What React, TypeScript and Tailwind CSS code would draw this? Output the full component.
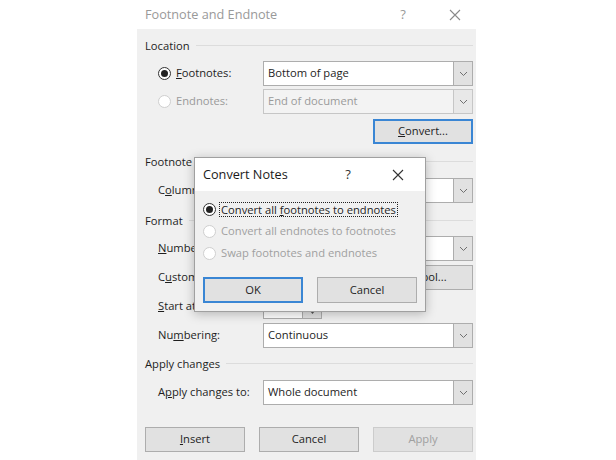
import React from 'react';

function Chevron() {
  return (
    <svg width="9" height="6" viewBox="0 0 9 6" fill="none">
      <path d="M1 1l3.5 3.5L8 1" stroke="#707070" strokeWidth="1" />
    </svg>
  );
}

function CloseIcon({ color }: { color: string }) {
  return (
    <svg width="12" height="12" viewBox="0 0 12 12" fill="none">
      <path d="M1 1l10 10M11 1L1 11" stroke={color} strokeWidth="1.1" />
    </svg>
  );
}

function Radio({ checked, disabled }: { checked?: boolean; disabled?: boolean }) {
  return (
    <span
      className={`flex h-[13px] w-[13px] shrink-0 items-center justify-center rounded-full border bg-white ${
        disabled ? 'border-[#cfcfcf]' : 'border-[#333]'
      }`}
    >
      {checked && <span className="h-[7px] w-[7px] rounded-full bg-[#222]" />}
    </span>
  );
}

function Select({ value = '', disabled }: { value?: string; disabled?: boolean }) {
  return (
    <div
      className={`flex h-[25px] flex-1 border ${
        disabled ? 'border-[#c6c6c6] bg-[#f3f3f3] text-[#9a9a9a]' : 'border-[#adadad] bg-white text-[#1e1e1e]'
      }`}
    >
      <span className="flex flex-1 items-center pl-[4px]">{value}</span>
      <span
        className={`flex w-[19px] items-center justify-center border-l ${
          disabled ? 'border-[#c6c6c6] bg-[#e8e8e8]' : 'border-[#adadad] bg-[#e1e1e1]'
        }`}
      >
        <Chevron />
      </span>
    </div>
  );
}

function Button({
  children,
  focused,
  disabled,
  className = '',
}: {
  children: React.ReactNode;
  focused?: boolean;
  disabled?: boolean;
  className?: string;
}) {
  return (
    <div
      className={`flex h-[25px] w-[100px] items-center justify-center bg-[#e1e1e1] ${
        focused ? 'border-2 border-[#3a86d4]' : disabled ? 'border border-[#cccccc] text-[#a0a0a0]' : 'border border-[#adadad]'
      } ${className}`}
    >
      {children}
    </div>
  );
}

function Header({ label, className = '' }: { label: string; className?: string }) {
  return (
    <div className={`flex h-[17px] items-center ${className}`}>
      <span>{label}</span>
      <div className="ml-[6px] mt-[-3px] h-px flex-1 bg-[#dcdcdc]" />
    </div>
  );
}

function Row({ label, children, className = '' }: { label: React.ReactNode; children: React.ReactNode; className?: string }) {
  return (
    <div className={`flex h-[25px] items-center pl-[13px] ${className}`}>
      <div className="flex w-[105px] items-center">{label}</div>
      {children}
    </div>
  );
}

export default function App() {
  return (
    <div className="relative h-[460px] w-[616px] overflow-hidden bg-white font-['Open_Sans','Noto_Sans',sans-serif] text-[11.2px] text-[#1e1e1e]">
      {/* Footnote and Endnote dialog */}
      <div className="ml-[137px] flex h-full w-[339px] flex-col">
        <div className="flex h-[29px] shrink-0 items-center text-[#999]">
          <span className="pl-[8px] text-[12.7px]">Footnote and Endnote</span>
          <span className="ml-auto flex w-[62px] justify-center text-[13px]">?</span>
          <span className="flex w-[42px] justify-center">
            <CloseIcon color="#8a8a8a" />
          </span>
        </div>

        <div className="flex flex-1 flex-col bg-[#f0f0f0] pl-[8px] pr-[3px]">
          <Header label="Location" className="mt-[9px]" />
          <Row
            className="mt-[6px]"
            label={
              <>
                <Radio checked />
                <span className="ml-[5px]">
                  <span className="underline">F</span>ootnotes:
                </span>
              </>
            }
          >
            <Select value="Bottom of page" />
          </Row>
          <Row
            className="mt-[3px]"
            label={
              <>
                <Radio disabled />
                <span className="ml-[5px] text-[#9a9a9a]">Endnotes:</span>
              </>
            }
          >
            <Select value="End of document" disabled />
          </Row>
          <div className="mt-[5px] flex justify-end">
            <Button focused>
              <span>
                <span className="underline">C</span>onvert...
              </span>
            </Button>
          </div>

          <Header label="Footnote layout" className="mt-[10px]" />
          <Row
            className="mt-[7px]"
            label={
              <span>
                C<span className="underline">o</span>lumns:
              </span>
            }
          >
            <Select />
          </Row>

          <Header label="Format" className="mt-[10px]" />
          <Row
            className="mt-[6px]"
            label={
              <span>
                <span className="underline">N</span>umber format:
              </span>
            }
          >
            <Select />
          </Row>
          <Row
            className="mt-[4px]"
            label={
              <span>
                C<span className="underline">u</span>stom mark:
              </span>
            }
          >
            <div className="h-[25px] w-[102px] border border-[#adadad] bg-white" />
            <Button className="ml-auto">Symbol...</Button>
          </Row>
          <Row
            className="mt-[4px]"
            label={
              <span>
                <span className="underline">S</span>tart at:
              </span>
            }
          >
            <div className="flex h-[24px]">
              <div className="w-[40px] border border-[#adadad] bg-white" />
              <div className="flex w-[19px] flex-col border border-l-0 border-[#adadad] bg-[#e1e1e1]">
                <span className="flex flex-1 items-center justify-center border-b border-[#adadad]">
                  <svg width="5" height="3" viewBox="0 0 5 3">
                    <path d="M0 3L2.5 0L5 3Z" fill="#555" />
                  </svg>
                </span>
                <span className="flex flex-1 items-center justify-center">
                  <svg width="5" height="3" viewBox="0 0 5 3">
                    <path d="M0 0L2.5 3L5 0Z" fill="#555" />
                  </svg>
                </span>
              </div>
            </div>
          </Row>
          <Row
            className="mt-[4px]"
            label={
              <span>
                Nu<span className="underline">m</span>bering:
              </span>
            }
          >
            <Select value="Continuous" />
          </Row>

          <Header label="Apply changes" className="mt-[8px]" />
          <Row
            className="mt-[7px]"
            label={
              <span>
                A<span className="underline">p</span>ply changes to:
              </span>
            }
          >
            <Select value="Whole document" />
          </Row>

          <div className="mt-[22px] flex gap-[14px]">
            <Button>
              <span>
                <span className="underline">I</span>nsert
              </span>
            </Button>
            <Button>Cancel</Button>
            <Button disabled>Apply</Button>
          </div>
        </div>
      </div>

      {/* Convert Notes modal */}
      <div className="absolute left-[194px] top-[157px] flex h-[155px] w-[232px] flex-col border border-[#a0a0a0] bg-white shadow-[0_2px_10px_rgba(0,0,0,0.25)]">
        <div className="flex h-[33px] shrink-0 items-center">
          <span className="pl-[8px] text-[12.7px] text-[#1a1a1a]">Convert Notes</span>
          <span className="ml-auto flex w-[50px] justify-center text-[13px] text-[#333]">?</span>
          <span className="mr-[2px] flex w-[50px] justify-center">
            <CloseIcon color="#333" />
          </span>
        </div>
        <div className="flex flex-1 flex-col bg-[#f0f0f0] pl-[8px]">
          <div className="mt-[9px] flex h-[18px] items-center">
            <Radio checked />
            <span className="ml-[3px] border border-dotted border-[#222] px-[1px] leading-[13px]">
              Convert all <span className="underline">f</span>ootnotes to endnotes
            </span>
          </div>
          <div className="mt-[4px] flex h-[18px] items-center text-[#a0a0a0]">
            <Radio disabled />
            <span className="ml-[5px]">Convert all endnotes to footnotes</span>
          </div>
          <div className="mt-[4px] flex h-[18px] items-center text-[#a0a0a0]">
            <Radio disabled />
            <span className="ml-[5px]">Swap footnotes and endnotes</span>
          </div>
          <div className="mt-[15px] flex gap-[14px]">
            <Button focused className="h-[26px]">OK</Button>
            <Button className="h-[26px]">Cancel</Button>
          </div>
        </div>
      </div>
    </div>
  );
}
